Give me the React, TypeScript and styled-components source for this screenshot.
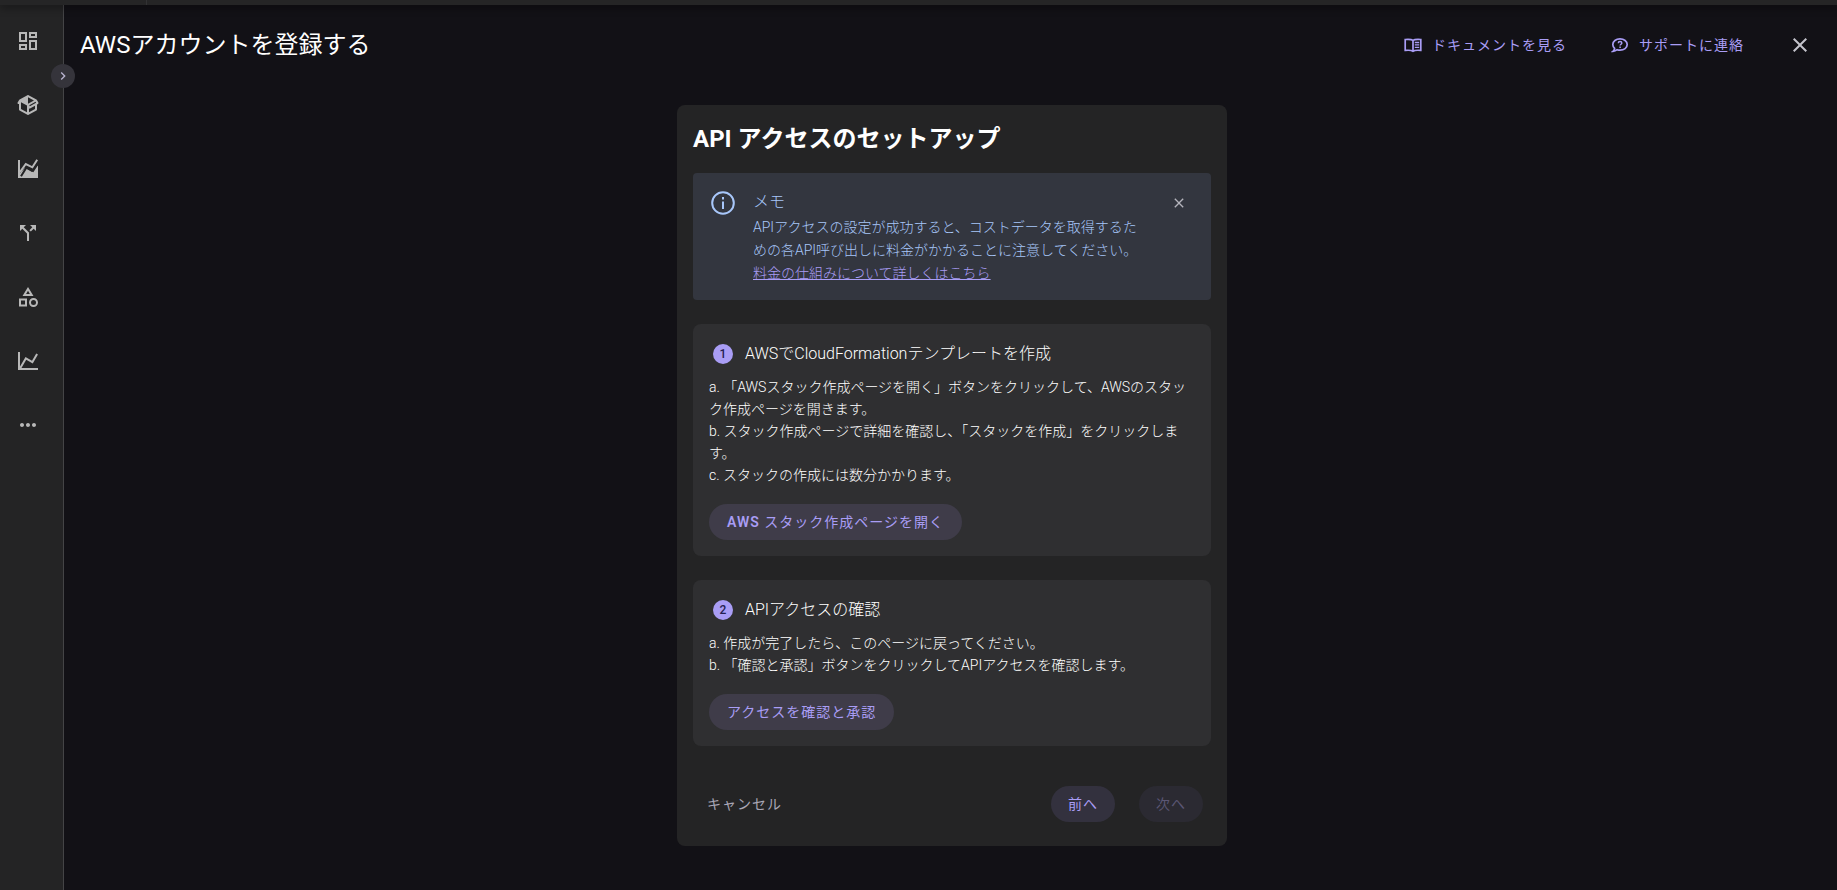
import React from "react";
import styled, { createGlobalStyle } from "styled-components";
import { MdOutlineDashboard, MdCallSplit, MdMoreHoriz, MdClose, MdChevronRight } from "react-icons/md";

const GlobalStyle = createGlobalStyle`
  *, *::before, *::after { box-sizing: border-box; }
  body {
    margin: 0;
    background: #121116;
    color: #ffffff;
    font-family: Roboto, "Noto Sans CJK JP", sans-serif;
    font-size: 14px;
    font-weight: 300;
    line-height: 23px;
  }
  button { font: inherit; border: 0; background: none; color: inherit; padding: 0; cursor: pointer; }
  h1, h2, h3, p, ol { margin: 0; padding: 0; }
`;

const Page = styled.div`
  display: flex;
  flex-direction: column;
  min-height: 100vh;
`;

const TopBar = styled.header`
  display: flex;
  height: 5px;
  background: #252526;
  box-shadow: 0 2px 8px rgba(0, 0, 0, 0.5);
  z-index: 1;
`;

const BrandSlot = styled.div`
  width: 147px;
  border-right: 1px solid #323234;
`;

const Body = styled.div`
  display: flex;
  flex: 1;
`;

const Sidebar = styled.nav`
  position: relative;
  display: flex;
  flex-direction: column;
  align-items: center;
  width: 64px;
  flex: none;
  padding: 4px 8px 0 0;
  background: #242425;
  border-right: 1px solid #444446;
`;

const NavLink = styled.a`
  display: flex;
  align-items: center;
  justify-content: center;
  width: 56px;
  height: 64px;
  color: #b8b8b8;
`;

const ExpandButton = styled.button`
  position: absolute;
  top: 59px;
  right: -12px;
  display: flex;
  align-items: center;
  justify-content: center;
  width: 24px;
  height: 24px;
  border-radius: 50%;
  background: #35343b;
  color: #b9b4d0;
`;

const Main = styled.main`
  display: flex;
  flex: 1;
  flex-direction: column;
  min-width: 0;
  padding: 16px 13px 40px 16px;
`;

const PageHeader = styled.div`
  display: flex;
  align-items: center;
  justify-content: space-between;
  height: 48px;
  margin-bottom: 36px;
`;

const PageTitle = styled.h1`
  font-size: 24px;
  font-weight: 400;
  line-height: 32px;
`;

const HeaderActions = styled.div`
  display: flex;
  align-items: center;
  padding-right: 12px;
`;

const HeaderLink = styled.a`
  display: flex;
  align-items: center;
  gap: 10px;
  margin-right: 44px;
  color: #a99df5;
  font-weight: 400;
  letter-spacing: 1px;
  text-decoration: none;
`;

const IconButton = styled.button<{ $color: string }>`
  display: flex;
  align-items: center;
  justify-content: center;
  width: 24px;
  height: 30px;
  color: ${(p) => p.$color};
`;

const Card = styled.section`
  display: flex;
  flex-direction: column;
  width: 100%;
  max-width: 550px;
  margin: 0 auto;
  padding: 16px 16px 24px;
  border-radius: 8px;
  background: #242425;
`;

const CardTitle = styled.h2`
  margin-bottom: 16px;
  font-size: 24px;
  font-weight: 700;
  line-height: 36px;
`;

const Note = styled.div`
  display: flex;
  align-items: flex-start;
  margin-bottom: 24px;
  padding: 15px 20px 15px 18px;
  border-radius: 4px;
  background: #33363f;
  color: #a8c7fa;
`;

const NoteIcon = styled.span`
  display: flex;
  align-items: center;
  height: 30px;
`;

const NoteBody = styled.div`
  flex: 1;
  margin: 0 26px 0 18px;
`;

const NoteTitle = styled.h3`
  font-size: 16px;
  font-weight: 300;
  line-height: 28px;
`;

const NoteLink = styled.a`
  color: #a99df5;
`;

const Step = styled.section`
  margin-bottom: 24px;
  padding: 16px;
  border-radius: 8px;
  background: #2f2f31;
`;

const StepHead = styled.div`
  display: flex;
  align-items: center;
  gap: 12px;
  height: 28px;
  margin: 0 0 8px 4px;
`;

const StepNumber = styled.span`
  display: flex;
  align-items: center;
  justify-content: center;
  width: 20px;
  height: 20px;
  border-radius: 50%;
  background: #a99df5;
  color: #252050;
  font-size: 12px;
  font-weight: 500;
`;

const StepTitle = styled.h3`
  font-size: 16px;
  font-weight: 300;
  line-height: 24px;
`;

const StepList = styled.ol`
  margin-bottom: 18px;
  line-height: 22px;
  list-style: none;
`;

const Button = styled.button<{ $tone: "step" | "nav" | "text" }>`
  min-width: 64px;
  height: 36px;
  padding: 0 ${(p) => ({ step: 18, nav: 16, text: 14 })[p.$tone]}px;
  border-radius: 18px;
  background: ${(p) => ({ step: "#3f3c49", nav: "#33313e", text: "transparent" })[p.$tone]};
  color: ${(p) => (p.$tone === "text" ? "#a9a6b5" : "#a99df5")};
  font-weight: 400;
  letter-spacing: 1px;

  &:disabled {
    background: #2b2a32;
    color: #5b5775;
    cursor: default;
  }
`;

const Latin = styled.span`
  font-weight: 600;
`;

const Footer = styled.div`
  display: flex;
  align-items: center;
  gap: 24px;
  margin-top: 16px;
  padding-right: 8px;
`;

const Spacer = styled.div`
  flex: 1;
`;

function PathIcon({ d, size = 24 }: { d: string; size?: number }) {
  return (
    <svg width={size} height={size} viewBox="0 0 24 24" fill="currentColor" aria-hidden="true">
      <path d={d} />
    </svg>
  );
}

const PACKAGE =
  "M2,10.96C1.5,10.68 1.35,10.07 1.63,9.59L3.13,7C3.24,6.8 3.41,6.66 3.6,6.58L11.43,2.18C11.59,2.06 11.79,2 12,2C12.21,2 12.41,2.06 12.57,2.18L20.47,6.62C20.66,6.72 20.82,6.88 20.91,7.08L22.36,9.6C22.64,10.08 22.47,10.69 22,10.96L21,11.54V16.5C21,16.88 20.79,17.21 20.47,17.38L12.57,21.82C12.41,21.94 12.21,22 12,22C11.79,22 11.59,21.94 11.43,21.82L3.53,17.38C3.21,17.21 3,16.88 3,16.5V10.96C2.7,11.13 2.32,11.14 2,10.96M12,4.15V4.15L12,10.85V10.85L17.96,7.5L12,4.15M5,15.91L11,19.29V12.58L5,9.21V15.91M19,15.91V12.69L14,15.59C13.67,15.77 13.3,15.76 13,15.6V19.29L19,15.91M13.85,13.36L20.13,9.73L19.55,8.72L13.27,12.35L13.85,13.36Z";
const SHAPES =
  "M11,13.5V21.5H3V13.5H11M9,15.5H5V19.5H9V15.5M12,2L17.5,11H6.5L12,2M12,5.86L10.08,9H13.92L12,5.86M17.5,13C20,13 22,15 22,17.5C22,20 20,22 17.5,22C15,22 13,20 13,17.5C13,15 15,13 17.5,13M17.5,15A2.5,2.5 0 0,0 15,17.5A2.5,2.5 0 0,0 17.5,20A2.5,2.5 0 0,0 20,17.5A2.5,2.5 0 0,0 17.5,15Z";
const CHART_LINE =
  "M16,11.78L20.24,4.45L21.97,5.45L16.74,14.5L10.23,10.75L5.46,19H22V21H2V3H4V17.54L9.5,8L16,11.78Z";

function AreaIcon() {
  return (
    <svg width="24" height="24" viewBox="0 0 24 24" fill="none" aria-hidden="true">
      <path d="M2 3H4V16L9 11L16 15L22 8V21H2Z" fill="currentColor" />
      <path d="M4 15.2L9.8 7L16.4 10.3L21.2 2.8" stroke="currentColor" strokeWidth="2" />
      <path d="M5 19.2L10.5 10.4L17 14L22.4 5.6" stroke="#242425" strokeWidth="2" />
    </svg>
  );
}

function BookIcon() {
  return (
    <svg width="18" height="18" viewBox="0 0 18 18" fill="none" stroke="currentColor" strokeWidth="1.7" aria-hidden="true">
      <path d="M9 4.4C7.6 3.3 5 3.2 1.2 3.5V14.4C5 14.1 7.6 14.2 9 15.2C10.4 14.2 13 14.1 16.8 14.4V3.5C13 3.2 10.4 3.3 9 4.4V15" />
      <path d="M10.8 6.5H15.2M10.8 8.9H15.2M10.8 11.3H15.2" strokeWidth="1.3" />
    </svg>
  );
}

function SupportIcon() {
  return (
    <svg width="18" height="18" viewBox="0 0 18 18" fill="none" stroke="currentColor" aria-hidden="true">
      <path d="M3.6 12.4C2.4 11.3 1.8 10 1.8 8.6C1.8 5.3 5 2.8 9 2.8S16.2 5.3 16.2 8.6S13 14.2 9 14.2C8 14.2 7 14 6.2 13.7C5 14.7 3.4 15.3 2 15.3C2.9 14.6 3.5 13.6 3.6 12.4Z" strokeWidth="1.7" />
      <path d="M7.3 7.2C7.3 6.2 8 5.6 9 5.6S10.8 6.2 10.8 7.1C10.8 8.2 9.1 8.3 9.1 9.6M9.1 10.6V12" strokeWidth="1.5" />
    </svg>
  );
}

function InfoIcon() {
  return (
    <svg width="24" height="24" viewBox="0 0 24 24" fill="none" stroke="currentColor" strokeWidth="2" aria-hidden="true">
      <circle cx="12" cy="12" r="10.8" />
      <path d="M12 10.4V18M12 6V8.4" />
    </svg>
  );
}

const navItems = [
  { label: "ダッシュボード", icon: <MdOutlineDashboard size={24} /> },
  { label: "リソース", icon: <PathIcon d={PACKAGE} /> },
  { label: "コスト", icon: <AreaIcon /> },
  { label: "配分", icon: <MdCallSplit size={24} /> },
  { label: "カテゴリ", icon: <PathIcon d={SHAPES} /> },
  { label: "レポート", icon: <PathIcon d={CHART_LINE} /> },
  { label: "その他", icon: <MdMoreHoriz size={24} /> },
];

export default function App() {
  return (
    <>
      <GlobalStyle />
      <Page lang="ja">
        <TopBar>
          <BrandSlot />
        </TopBar>
        <Body>
          <Sidebar>
            {navItems.map((item) => (
              <NavLink key={item.label} href="#" aria-label={item.label}>
                {item.icon}
              </NavLink>
            ))}
            <ExpandButton aria-label="メニューを開く">
              <MdChevronRight size={16} />
            </ExpandButton>
          </Sidebar>
          <Main>
            <PageHeader>
              <PageTitle>AWSアカウントを登録する</PageTitle>
              <HeaderActions>
                <HeaderLink href="#">
                  <BookIcon />
                  ドキュメントを見る
                </HeaderLink>
                <HeaderLink href="#">
                  <SupportIcon />
                  サポートに連絡
                </HeaderLink>
                <IconButton $color="#c4c4cc" aria-label="閉じる">
                  <MdClose size={24} />
                </IconButton>
              </HeaderActions>
            </PageHeader>
            <Card>
              <CardTitle>API アクセスのセットアップ</CardTitle>
              <Note>
                <NoteIcon>
                  <InfoIcon />
                </NoteIcon>
                <NoteBody>
                  <NoteTitle>メモ</NoteTitle>
                  <p>
                    APIアクセスの設定が成功すると、コストデータを取得するための各API呼び出しに料金がかかることに注意してください。
                  </p>
                  <NoteLink href="#">料金の仕組みについて詳しくはこちら</NoteLink>
                </NoteBody>
                <IconButton $color="#b4b4bc" aria-label="メモを閉じる">
                  <MdClose size={16} />
                </IconButton>
              </Note>
              <Step>
                <StepHead>
                  <StepNumber>1</StepNumber>
                  <StepTitle>AWSでCloudFormationテンプレートを作成</StepTitle>
                </StepHead>
                <StepList>
                  <li>a. 「AWSスタック作成ページを開く」ボタンをクリックして、AWSのスタック作成ページを開きます。</li>
                  <li>b. スタック作成ページで詳細を確認し、「スタックを作成」をクリックします。</li>
                  <li>c. スタックの作成には数分かかります。</li>
                </StepList>
                <Button $tone="step">
                  <Latin>AWS</Latin> スタック作成ページを開く
                </Button>
              </Step>
              <Step>
                <StepHead>
                  <StepNumber>2</StepNumber>
                  <StepTitle>APIアクセスの確認</StepTitle>
                </StepHead>
                <StepList>
                  <li>a. 作成が完了したら、このページに戻ってください。</li>
                  <li>b. 「確認と承認」ボタンをクリックしてAPIアクセスを確認します。</li>
                </StepList>
                <Button $tone="step">アクセスを確認と承認</Button>
              </Step>
              <Footer>
                <Button $tone="text">キャンセル</Button>
                <Spacer />
                <Button $tone="nav">前へ</Button>
                <Button $tone="nav" disabled>
                  次へ
                </Button>
              </Footer>
            </Card>
          </Main>
        </Body>
      </Page>
    </>
  );
}
